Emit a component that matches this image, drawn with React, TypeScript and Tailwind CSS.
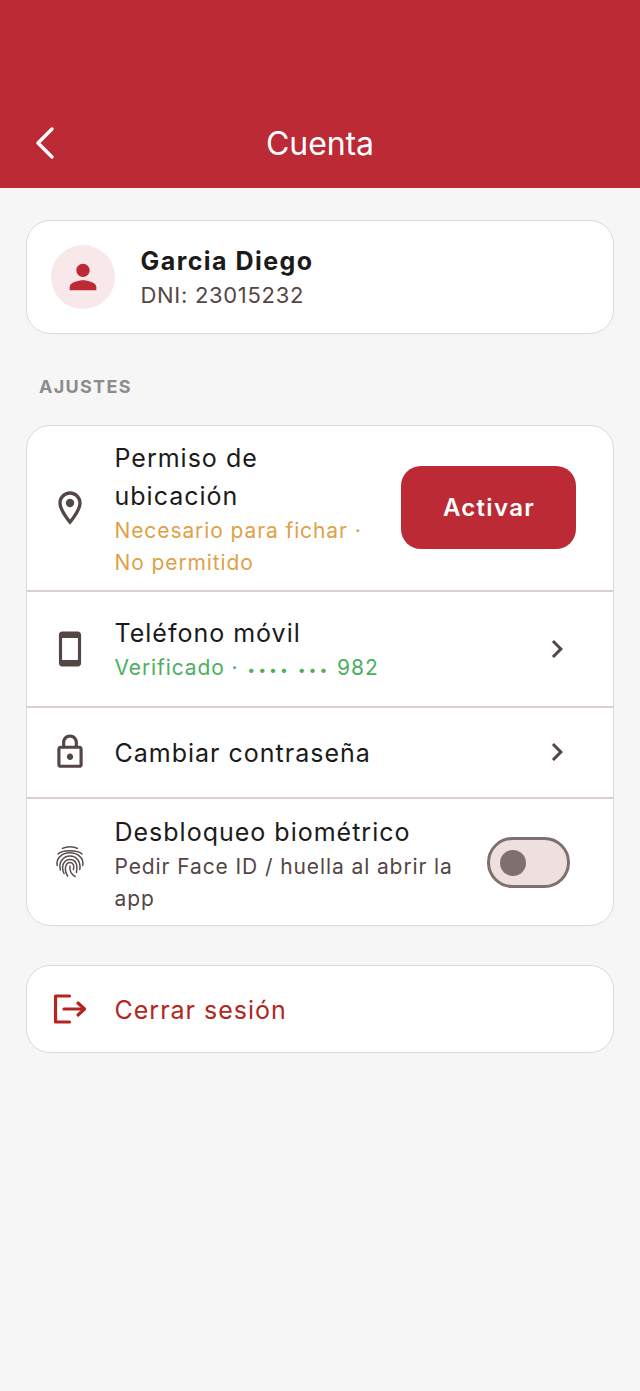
import type { ReactNode } from "react";
import { MdChevronRight, MdOutlineLock, MdOutlineLocationOn, MdPerson, MdSmartphone } from "react-icons/md";

function Fingerprint() {
  return (
    <svg width="30" height="34" viewBox="0 0 30 34" fill="none" stroke="#5a4d4d" strokeWidth="1.5" strokeLinecap="round">
      <path d="M7.5 3.4C11.5 1.2 18.5 1.2 22.5 3.4" />
      <path d="M3 9C7 4.6 23 4.6 27 9" />
      <path d="M2.2 20.5C0.8 12.5 8 7.8 15 7.8C22 7.8 29 12.5 27.8 20.5" />
      <path d="M5.4 25C3.2 17 8.5 11 15 11C21.5 11 26 16.5 24.8 24.5" />
      <path d="M9 28.5C5.5 21 9 14.4 15 14.4C20.5 14.4 23 19 21.4 27.5" />
      <path d="M12.6 31C8.6 24.5 10.5 17.6 15 17.6C18.5 17.6 19.4 21 18.4 24.5" />
      <path d="M15 21.2C14.4 25 16 29 20 31.5" />
    </svg>
  );
}

function LogoutIcon() {
  return (
    <svg width="34" height="30" viewBox="0 0 34 30" fill="none" stroke="#b3261e" strokeWidth="3.2" strokeLinecap="round" strokeLinejoin="round">
      <path d="M16.5 2H2.5V28H16.5" />
      <path d="M11 15H31" />
      <path d="M25 9L31.5 15L25 21" />
    </svg>
  );
}

function Card({ children, className }: { children: ReactNode; className?: string }) {
  return (
    <div className={`mx-[26px] rounded-[24px] border-[1.5px] border-[#dadada] bg-white ${className ?? ""}`}>
      {children}
    </div>
  );
}

function Divider() {
  return <div className="h-[2px] bg-[#dccfd0]" />;
}

function IconCell({ children }: { children: ReactNode }) {
  return <div className="flex w-[87.5px] shrink-0 justify-center pr-[1px] text-[#554646]">{children}</div>;
}

const titleClass = "text-[25px] leading-[38px] tracking-[1px] text-[#1c1a1a]";
const subClass = "text-[21px] leading-[32px] tracking-[0.9px]";

export default function App() {
  return (
    <div
      className="flex min-h-[1391px] w-[640px] flex-col bg-[#f6f6f6]"
      style={{ fontFamily: "Inter, 'Noto Sans', sans-serif" }}
    >
      <header className="relative flex h-[188px] items-end justify-center bg-[#bc2a35] pb-[24px]">
        <svg
          className="absolute bottom-[28px] left-[34px]"
          width="22"
          height="34"
          viewBox="0 0 22 34"
          fill="none"
          stroke="white"
          strokeWidth="3.4"
          strokeLinecap="round"
          strokeLinejoin="round"
        >
          <path d="M18 3L4 17L18 31" />
        </svg>
        <h1 className="text-[32px] leading-[40px] font-normal tracking-[-0.1px] text-white">Cuenta</h1>
      </header>

      <Card className="mt-[32px] flex h-[114px] items-center pl-[23.5px]">
        <div className="flex h-[64px] w-[64px] items-center justify-center rounded-full bg-[#f8e8ea] text-[#bc2a35]">
          <MdPerson size={40} />
        </div>
        <div className="ml-[26px]">
          <div className="text-[25px] leading-[35px] font-bold tracking-[1.45px] text-[#1c1a1a]">Garcia Diego</div>
          <div className="text-[22px] leading-[32px] tracking-[0.7px] text-[#554646]">DNI: 23015232</div>
        </div>
      </Card>

      <div className="mt-[42px] ml-[39px] text-[18px] leading-[22px] font-bold tracking-[1.3px] text-[#8c8c8c]">
        AJUSTES
      </div>

      <Card className="mt-[27px] overflow-hidden">
        <div className="flex h-[163.5px] items-center">
          <IconCell>
            <MdOutlineLocationOn size={40} />
          </IconCell>
          <div className="w-[270px] pt-[2px]">
            <div className={titleClass}>Permiso de ubicación</div>
            <div className={`${subClass} text-[#dfa148]`}>Necesario para fichar · No permitido</div>
          </div>
          <button className="ml-[16px] flex h-[83px] w-[175px] items-center justify-center rounded-[20px] bg-[#bc2a35] pl-[2px] text-[24px] font-semibold tracking-[1.3px] text-white">
            Activar
          </button>
        </div>
        <Divider />
        <div className="flex h-[114px] items-center">
          <IconCell>
            <MdSmartphone size={38} />
          </IconCell>
          <div className="flex-1 pt-[3px]">
            <div className={titleClass}>Teléfono móvil</div>
            <div className={`${subClass} text-[#4caf60]`}>
              Verificado · <span className="ml-[2px] text-[14px] tracking-[3px]">••••</span>{" "}
              <span className="text-[14px] tracking-[3px]">•••</span> 982
            </div>
          </div>
          <div className="mr-[38px] text-[#554646]">
            <MdChevronRight size={36} />
          </div>
        </div>
        <Divider />
        <div className="flex h-[89px] items-center">
          <IconCell>
            <MdOutlineLock size={38} />
          </IconCell>
          <div className={`flex-1 pt-[2px] ${titleClass}`}>Cambiar contraseña</div>
          <div className="mr-[38px] text-[#554646]">
            <MdChevronRight size={36} />
          </div>
        </div>
        <Divider />
        <div className="flex h-[126px] items-center">
          <IconCell>
            <Fingerprint />
          </IconCell>
          <div className="w-[345px] pt-[5px]">
            <div className={titleClass}>Desbloqueo biométrico</div>
            <div className={`${subClass} text-[#554646]`}>Pedir Face ID / huella al abrir la app</div>
          </div>
          <div className="mt-[2px] ml-[27.5px] flex h-[51px] w-[83px] items-center rounded-full border-[3px] border-[#7f6f6f] bg-[#efe0e0] pl-[10px]">
            <div className="h-[26px] w-[26px] rounded-full bg-[#7f6f6f]" />
          </div>
        </div>
      </Card>

      <Card className="mt-[39px] flex h-[88px] items-center">
        <IconCell>
          <LogoutIcon />
        </IconCell>
        <div className="pt-[4px] text-[25px] tracking-[1px] text-[#b3261e]">Cerrar sesión</div>
      </Card>
    </div>
  );
}
